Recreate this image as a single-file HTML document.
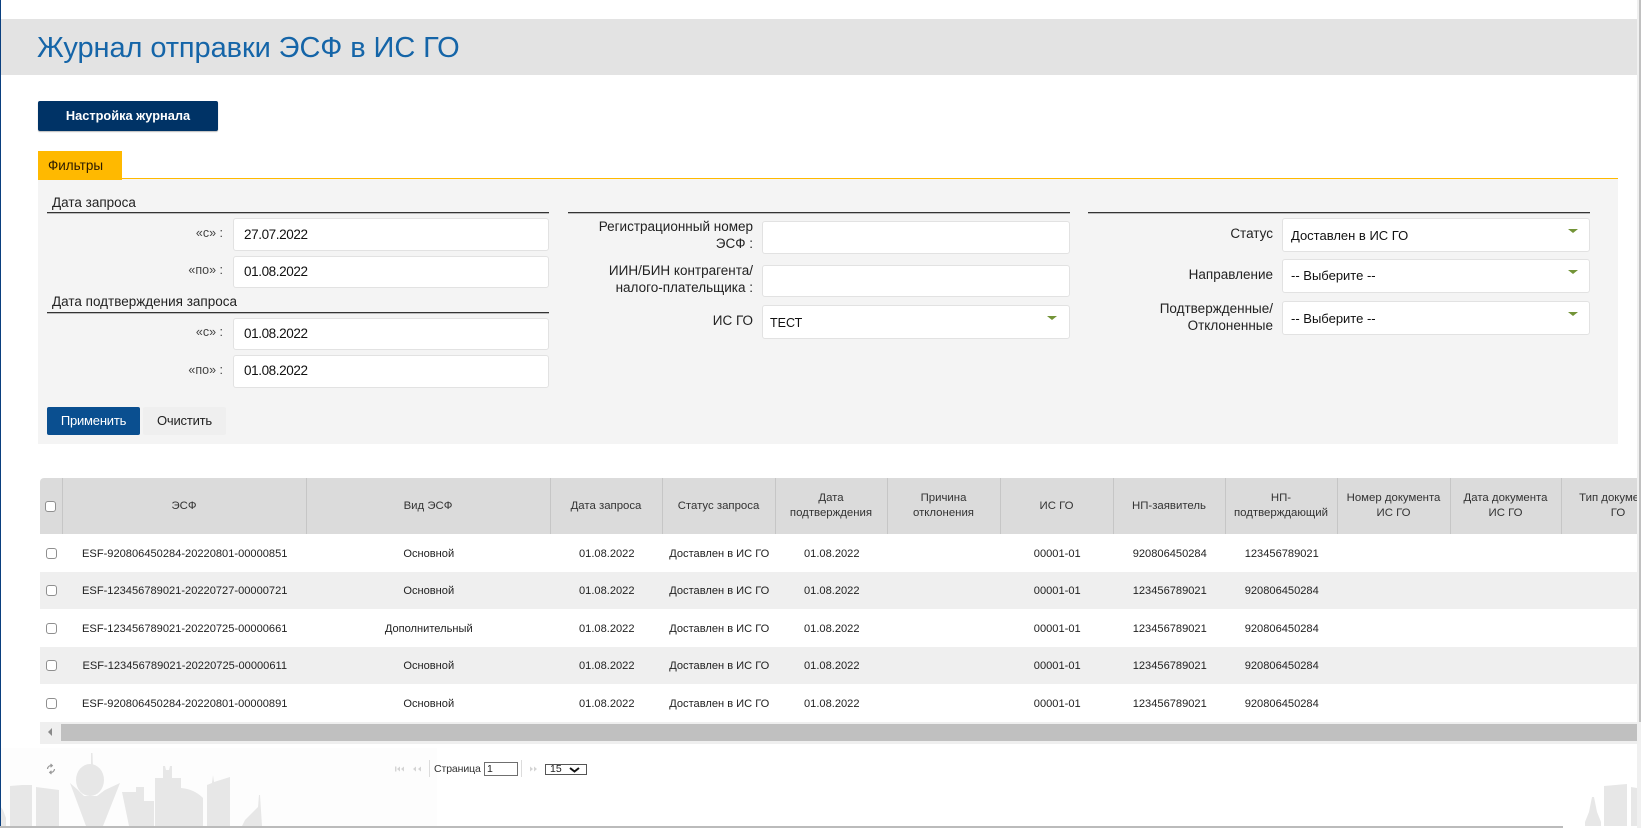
<!DOCTYPE html>
<html lang="ru">
<head>
<meta charset="utf-8">
<title>Журнал отправки ЭСФ в ИС ГО</title>
<style>
html,body{margin:0;padding:0;background:#fff;}
body{position:relative;width:1641px;height:828px;overflow:hidden;font-family:"Liberation Sans","Noto Sans CJK SC",sans-serif;color:#222;}
.a{position:absolute;box-sizing:border-box;}
.t{position:absolute;white-space:nowrap;font-size:13.5px;line-height:17px;}
.r{text-align:right;}
.inp{position:absolute;box-sizing:border-box;background:#fff;border:1px solid #e2e2e2;border-radius:3px;}
.v{position:absolute;white-space:nowrap;font-size:13.5px;line-height:18px;color:#111;letter-spacing:-.4px;}
.s{font-size:13px;letter-spacing:0;}
.hr{position:absolute;height:1px;background:#333;box-shadow:0 .4px 0 #666;}
.lab{position:absolute;white-space:nowrap;font-size:12.5px;line-height:16px;color:#444;text-align:right;}
.arr{position:absolute;width:0;height:0;border-left:5px solid transparent;border-right:5px solid transparent;border-top:4.5px solid #739437;}
table{border-collapse:collapse;table-layout:fixed;width:1635px;font-size:11.1px;color:#333;}
th{background:#dbdbdb;font-weight:normal;font-size:11.4px;height:56px;padding:0 2px;line-height:15px;text-align:center;border-right:1px solid #c6c6c6;box-sizing:border-box;color:#333;}
td{padding:1px 0 0 1.5px;text-align:center;white-space:nowrap;color:#222;}
td:first-child{padding:0;}
tr.z td{background:#efefef;}
.cb{display:block;box-sizing:border-box;width:11px;height:11px;background:#fff;border:1.2px solid #8f8f8f;border-radius:3px;}
</style>
</head>
<body>
<!-- skyline background -->
<svg class="a" style="left:0;top:745px" width="1641" height="83" viewBox="0 745 1641 83">
  <rect x="0" y="748" width="437" height="80" fill="#fdfdfd"/>
  <g fill="#e7e7e7">
    <polygon points="0,826 0,806 3,810 6,818 6,826"/>
    <polygon points="10,786 22,785 32,785 32,826 10,826"/>
    <polygon points="36,787 59,790 59,826 36,826"/>
    <ellipse cx="90" cy="780" rx="14" ry="16"/>
    <polygon points="91,753 92.5,753 93,768 91,768"/>
    <polygon points="70,783 78,790 84,796 97,796 105,790 120,783 103,826 86,826"/>
    <polygon points="122,792 136,792 136,787 144,787 144,801 154,801 154,826 129,826"/>
    <polygon points="155,778 163,778 163,766 165,766 166,770 169,770 170,766 172,766 172,778 181,778 181,826 155,826"/>
    <path d="M181 788Q194 789 203 798V826H181Z"/>
    <polygon points="207,785 212,783 213,775 214,782 230,777 230,826 207,826"/>
    <polygon points="242,826 245,820 258,807 259,795 260,795 262,826"/>
    <polygon points="1592,797 1594,797 1597,812 1601,822 1601,826 1585,826 1585,822 1589,812"/>
    <polygon points="1604,786 1627,784 1627,826 1604,826"/>
    <polygon points="1631,787 1637,788 1637,826 1631,826"/>
  </g>
</svg>

<!-- window edges -->
<div class="a" style="left:0;top:0;width:1px;height:826px;background:#0a3f7f"></div>
<div class="a" style="left:1637px;top:0;width:4px;height:828px;background:#f0f0f0"></div>
<div class="a" style="left:1639px;top:0;width:2px;height:722px;background:#c0c0c0"></div>
<div class="a" style="left:0;top:826px;width:1563px;height:2px;background:#bbb"></div>

<!-- header -->
<div class="a" style="left:1px;top:19px;width:1636px;height:56px;background:#e3e3e3"></div>
<div class="t" style="left:37px;top:29px;font-size:29px;line-height:38px;color:#1565a8;letter-spacing:-.08px">Журнал отправки ЭСФ в ИС ГО</div>

<!-- config button -->
<div class="a" style="left:38px;top:101px;width:180px;height:30px;background:#003366;border-radius:2px;box-shadow:0 1px 1px #bbb;color:#fff;font-size:12.8px;line-height:30px;text-align:center;font-weight:bold">Настройка журнала</div>

<!-- filter panel -->
<div class="a" style="left:38px;top:178px;width:1580px;height:1.5px;background:#ffb900"></div>
<div class="a" style="left:38px;top:179px;width:1580px;height:265px;background:#f4f4f4"></div>
<div class="a" style="left:38px;top:151px;width:84px;height:29px;background:#ffb900"></div>
<div class="t" style="left:48px;top:157px;font-size:13.5px;color:#2a1a00">Фильтры</div>

<!-- left column -->
<div class="t" style="left:52px;top:194px;color:#222">Дата запроса</div>
<div class="hr" style="left:47px;top:212px;width:502px"></div>
<div class="lab" style="right:1418px;top:225px">«с» :</div>
<div class="inp" style="left:233px;top:218px;width:316px;height:33px"></div>
<div class="v" style="left:244px;top:226px">27.07.2022</div>
<div class="lab" style="right:1418px;top:262px">«по» :</div>
<div class="inp" style="left:233px;top:256px;width:316px;height:32px"></div>
<div class="v" style="left:244px;top:263px">01.08.2022</div>
<div class="t" style="left:52px;top:293px;color:#222">Дата подтверждения запроса</div>
<div class="hr" style="left:47px;top:312px;width:502px"></div>
<div class="lab" style="right:1418px;top:324px">«с» :</div>
<div class="inp" style="left:233px;top:318px;width:316px;height:32px"></div>
<div class="v" style="left:244px;top:325px">01.08.2022</div>
<div class="lab" style="right:1418px;top:362px">«по» :</div>
<div class="inp" style="left:233px;top:355px;width:316px;height:33px"></div>
<div class="v" style="left:244px;top:362px">01.08.2022</div>

<div class="a" style="left:47px;top:407px;width:93px;height:28px;background:#0a4f90;border-radius:2px;color:#fff;font-size:13px;line-height:28px;text-align:center;letter-spacing:-.2px">Применить</div>
<div class="a" style="left:143px;top:407px;width:83px;height:28px;background:#efefef;border-radius:2px;color:#222;font-size:13px;line-height:28px;text-align:center;letter-spacing:-.2px">Очистить</div>

<!-- middle column -->
<div class="hr" style="left:568px;top:212px;width:502px"></div>
<div class="t r" style="right:888px;top:218px">Регистрационный номер<br>ЭСФ :</div>
<div class="inp" style="left:762px;top:221px;width:308px;height:33px"></div>
<div class="t r" style="right:888px;top:262px">ИИН/БИН контрагента/<br>налого-плательщика :</div>
<div class="inp" style="left:762px;top:265px;width:308px;height:32px"></div>
<div class="t r" style="right:888px;top:312px">ИС ГО</div>
<div class="inp" style="left:762px;top:305px;width:308px;height:34px"></div>
<div class="v s" style="left:770px;top:314px;font-size:12.5px">ТЕСТ</div>
<div class="arr" style="left:1047px;top:316px"></div>

<!-- right column -->
<div class="hr" style="left:1088px;top:212px;width:502px"></div>
<div class="t r" style="right:368px;top:225px">Статус</div>
<div class="inp" style="left:1282px;top:218px;width:308px;height:34px"></div>
<div class="v s" style="left:1291px;top:227px">Доставлен в ИС ГО</div>
<div class="arr" style="left:1568px;top:229px"></div>
<div class="t r" style="right:368px;top:266px">Направление</div>
<div class="inp" style="left:1282px;top:259px;width:308px;height:34px"></div>
<div class="v s" style="left:1291px;top:267px">-- Выберите --</div>
<div class="arr" style="left:1568px;top:270px"></div>
<div class="t r" style="right:368px;top:300px">Подтвержденные/<br>Отклоненные</div>
<div class="inp" style="left:1282px;top:301px;width:308px;height:34px"></div>
<div class="v s" style="left:1291px;top:310px">-- Выберите --</div>
<div class="arr" style="left:1568px;top:312px"></div>

<!-- grid -->
<div class="a" style="left:40px;top:478px;width:1597px;height:244px;overflow:hidden;border-radius:4px 0 0 0">
<table>
<colgroup><col style="width:22px"><col style="width:244px"><col style="width:244px"><col style="width:112px"><col style="width:113px"><col style="width:112px"><col style="width:113px"><col style="width:113px"><col style="width:112px"><col style="width:112px"><col style="width:113px"><col style="width:111px"><col style="width:114px"></colgroup>
<tr><th style="padding:0"><span class="cb" style="margin-left:5px"></span></th><th>ЭСФ</th><th>Вид ЭСФ</th><th>Дата запроса</th><th>Статус запроса</th><th>Дата<br>подтверждения</th><th>Причина<br>отклонения</th><th>ИС ГО</th><th>НП-заявитель</th><th>НП-<br>подтверждающий</th><th>Номер документа<br>ИС ГО</th><th>Дата документа<br>ИС ГО</th><th style="white-space:nowrap">Тип документа<br>ГО</th></tr>
<tr style="height:38px"><td><span class="cb" style="margin-left:6px"></span></td><td>ESF-920806450284-20220801-00000851</td><td>Основной</td><td>01.08.2022</td><td>Доставлен в ИС ГО</td><td>01.08.2022</td><td></td><td>00001-01</td><td>920806450284</td><td>123456789021</td><td></td><td></td><td></td></tr>
<tr class="z" style="height:37px"><td><span class="cb" style="margin-left:6px"></span></td><td>ESF-123456789021-20220727-00000721</td><td>Основной</td><td>01.08.2022</td><td>Доставлен в ИС ГО</td><td>01.08.2022</td><td></td><td>00001-01</td><td>123456789021</td><td>920806450284</td><td></td><td></td><td></td></tr>
<tr style="height:38px"><td><span class="cb" style="margin-left:6px"></span></td><td>ESF-123456789021-20220725-00000661</td><td>Дополнительный</td><td>01.08.2022</td><td>Доставлен в ИС ГО</td><td>01.08.2022</td><td></td><td>00001-01</td><td>123456789021</td><td>920806450284</td><td></td><td></td><td></td></tr>
<tr class="z" style="height:37px"><td><span class="cb" style="margin-left:6px"></span></td><td>ESF-123456789021-20220725-00000611</td><td>Основной</td><td>01.08.2022</td><td>Доставлен в ИС ГО</td><td>01.08.2022</td><td></td><td>00001-01</td><td>123456789021</td><td>920806450284</td><td></td><td></td><td></td></tr>
<tr style="height:38px"><td><span class="cb" style="margin-left:6px"></span></td><td>ESF-920806450284-20220801-00000891</td><td>Основной</td><td>01.08.2022</td><td>Доставлен в ИС ГО</td><td>01.08.2022</td><td></td><td>00001-01</td><td>123456789021</td><td>920806450284</td><td></td><td></td><td></td></tr>
</table>
</div>

<!-- horizontal scrollbar -->
<div class="a" style="left:40px;top:722px;width:1597px;height:22px;background:#efefef"></div>
<div class="a" style="left:61px;top:724px;width:1576px;height:17px;background:#c0c0c0"></div>
<div class="a" style="left:48px;top:728px;width:0;height:0;border-top:4.5px solid transparent;border-bottom:4.5px solid transparent;border-right:4.5px solid #8a8a8a"></div>

<!-- pager -->
<svg class="a" style="left:45px;top:763px" width="12" height="12" viewBox="0 0 12 12" fill="none" stroke="#9a9a9a" stroke-width="1.2">
  <path d="M2.5 6a3.5 3.5 0 0 1 4-3.4M9.5 6a3.5 3.5 0 0 1-4 3.4"/>
  <path d="M5.5 1l1.8 1.6L5.5 4.2"/><path d="M6.5 7.8L4.7 9.4l1.8 1.6"/>
</svg>
<svg class="a" style="left:394px;top:765px" width="30" height="8" viewBox="0 0 30 8" fill="#d4d4d4">
  <rect x="1" y="1.5" width="1.4" height="5"/><path d="M6 1.5v5L3 4zM10 1.5v5L7 4z"/>
  <path d="M22 1.5v5L19 4zM27 1.5v5L24 4z"/>
</svg>
<div class="a" style="left:429px;top:760px;width:1px;height:17px;background:#dcdcdc"></div>
<div class="t" style="left:434px;top:761px;font-size:10.5px;color:#333;letter-spacing:-.1px">Страница</div>
<div class="a" style="left:484px;top:762px;width:34px;height:13.5px;background:#fff;border:1px solid #6f6f6f;font-size:10.5px;line-height:12px;padding-left:2px;color:#222">1</div>
<div class="a" style="left:521px;top:760px;width:1px;height:17px;background:#dcdcdc"></div>
<svg class="a" style="left:529px;top:765px" width="10" height="8" viewBox="0 0 10 8" fill="#d4d4d4">
  <path d="M1 1.5v5L4 4zM5 1.5v5L8 4z"/>
</svg>
<div class="a" style="left:545px;top:764px;width:42px;height:11px;background:#fff;border:1px solid #555;font-size:10.5px;line-height:9.5px;padding-left:4px;color:#222">15</div>
<svg class="a" style="left:569px;top:767px" width="11" height="6" viewBox="0 0 11 6" fill="none" stroke="#111" stroke-width="2"><path d="M1 1l4.5 3.5L10 1"/></svg>
</body>
</html>
